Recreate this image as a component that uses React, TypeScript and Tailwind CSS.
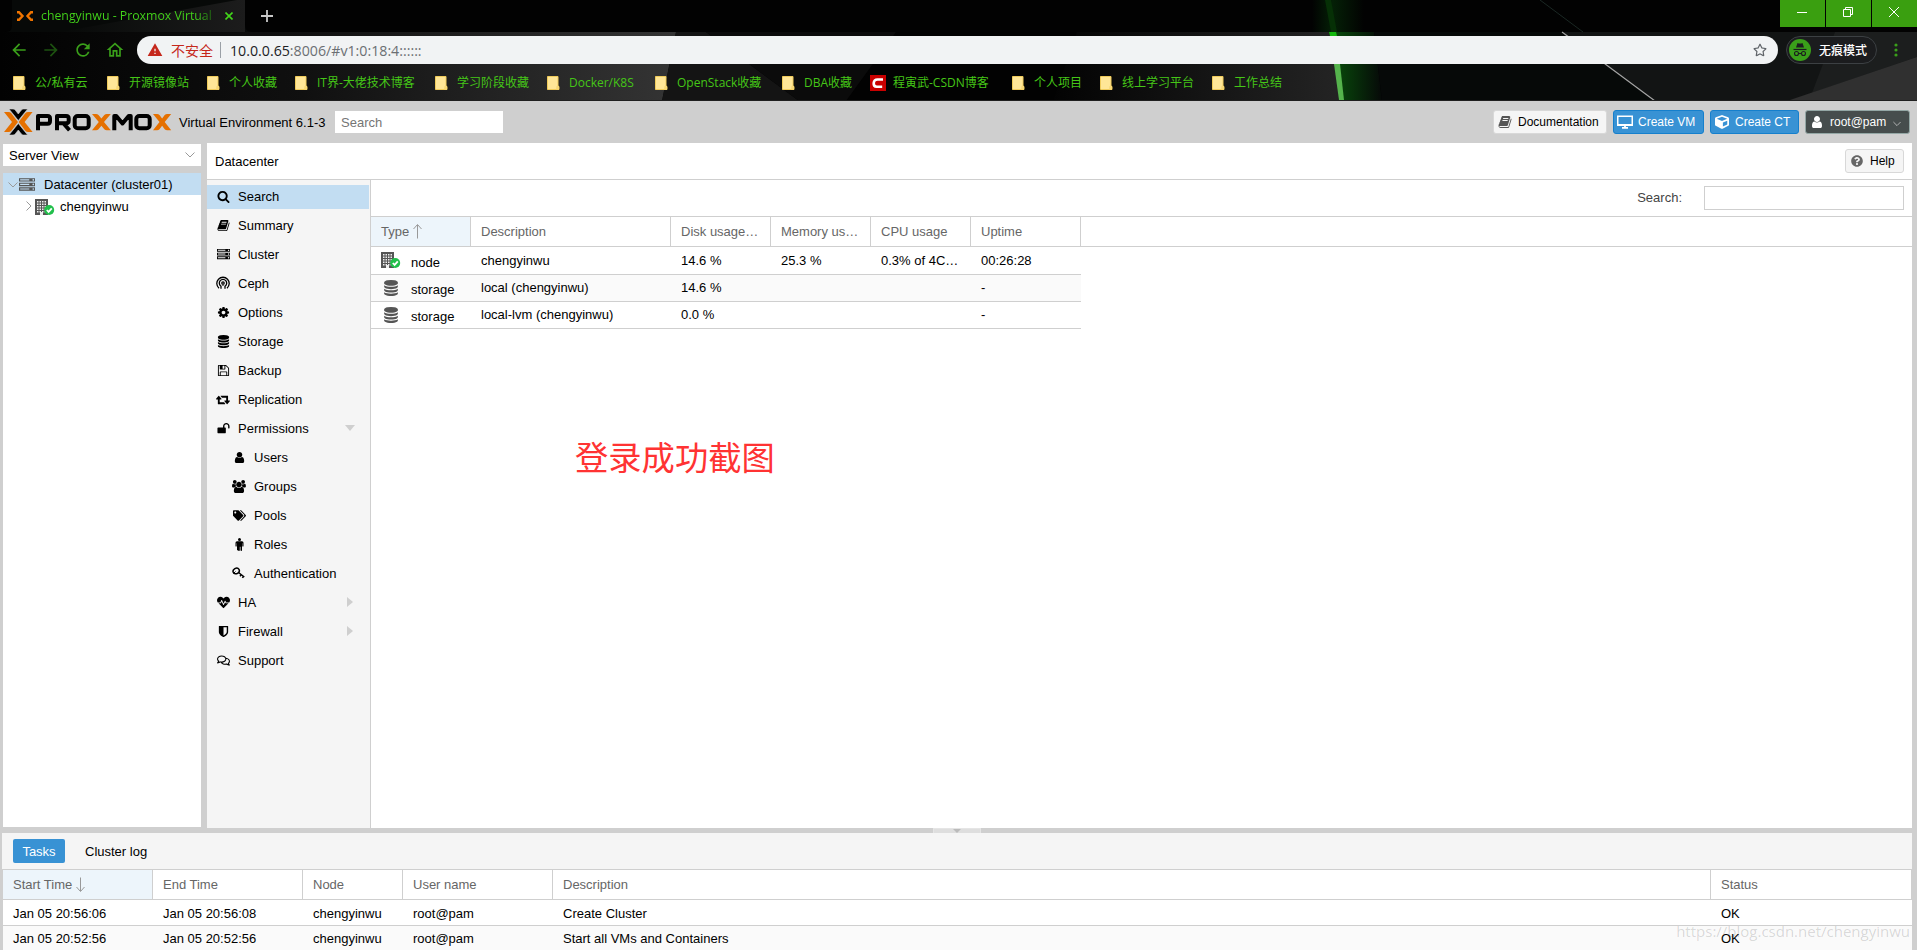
import type { ReactNode } from 'react';
import { FaCube, FaQuestionCircle, FaRegComments, FaRegStar, FaTags, FaHeartbeat } from 'react-icons/fa';
import { MdArrowBack, MdArrowForward, MdRefresh, MdOutlineHome, MdWarning } from 'react-icons/md';
import clsx from 'clsx';

const ui = "font-['Liberation_Sans','Noto_Sans_CJK_SC',sans-serif]";
const chromeFont = "font-['Open_Sans','Noto_Sans_CJK_SC',sans-serif]";

const paths = {
  search:
    'M1216 832q0-185-131.5-316.5t-316.5-131.5-316.5 131.5-131.5 316.5 131.5 316.5 316.5 131.5 316.5-131.5 131.5-316.5zm512 832q0 52-38 90t-90 38q-54 0-90-38l-343-342q-179 124-399 124-143 0-273.5-55.5t-225-150-150-225-55.5-273.5 55.5-273.5 150-225 225-150 273.5-55.5 273.5 55.5 225 150 150 225 55.5 273.5q0 220-124 399l343 343q37 37 37 90z',
  book:
    'M1703 478q40 57 18 129l-275 906q-19 64-76.5 107.5t-122.5 43.5h-923q-77 0-148.5-53.5t-99.5-131.5q-24-67-2-127 0-4 3-27t4-37q1-8-3-21.5t-3-19.5q2-11 8-21t16.5-23.5 16.5-23.5q23-38 45-91.5t30-91.5q3-10 .5-30t-.5-28q3-11 17-28t17-23q21-36 42-92t25-90q1-9-2.5-32t.5-28q4-13 22-30.5t22-22.5q19-26 42.5-84.5t27.5-96.5q1-8-3-25.5t-2-26.5q2-8 9-18t18-23 17-21q8-12 16.5-30.5t15-35 16-36 19.5-32 26.5-23.5 36-11.5 47.5 5.5l-1 3q38-9 51-9h761q74 0 114 56t18 130l-274 906q-36 119-71.5 153.5t-128.5 34.5h-869q-27 0-38 15-11 16-1 43 24 70 144 70h923q29 0 56-15.5t35-41.5l300-987q7-22 5-57 38 15 59 43zm-1064 2q-4 13 2 22.5t20 9.5h608q13 0 25.5-9.5t16.5-22.5l21-64q4-13-2-22.5t-20-9.5h-608q-13 0-25.5 9.5t-16.5 22.5zm-83 256q-4 13 2 22.5t20 9.5h608q13 0 25.5-9.5t16.5-22.5l21-64q4-13-2-22.5t-20-9.5h-608q-13 0-25.5 9.5t-16.5 22.5z',
  server:
    'M128 1408h1024v-128h-1024v128zm0-512h1024v-128h-1024v128zm1568 448q0-40-28-68t-68-28-68 28-28 68 28 68 68 28 68-28 28-68zm-1568-960h1024v-128h-1024v128zm1568 448q0-40-28-68t-68-28-68 28-28 68 28 68 68 28 68-28 28-68zm0-512q0-40-28-68t-68-28-68 28-28 68 28 68 68 28 68-28 28-68zm96 832v384h-1792v-384h1792zm0-512v384h-1792v-384h1792zm0-512v384h-1792v-384h1792z',
  cog:
    'M1152 896q0-106-75-181t-181-75-181 75-75 181 75 181 181 75 181-75 75-181zm512-109v222q0 12-8 23t-20 13l-185 28q-19 54-39 91 35 50 107 138 10 12 10 25t-9 23q-27 37-99 108t-94 71q-12 0-26-9l-138-108q-44 23-91 38-16 136-29 186-7 28-36 28h-222q-14 0-24.5-8.5t-11.5-21.5l-28-184q-49-16-90-37l-141 107q-10 9-25 9-14 0-25-11-126-114-165-168-7-10-7-23 0-12 8-23 15-21 51-66.5t54-70.5q-27-50-41-99l-183-27q-13-2-21-12.5t-8-23.5v-222q0-12 8-23t19-13l186-28q14-46 39-92-40-57-107-138-10-12-10-24 0-10 9-23 26-36 98.5-107.5t94.5-71.5q13 0 26 10l138 107q44-23 91-38 16-136 29-186 7-28 36-28h222q14 0 24.5 8.5t11.5 21.5l28 184q49 16 90 37l142-107q9-9 24-9 13 0 25 10 129 119 165 170 7 8 7 22 0 12-8 23-15 21-51 66.5t-54 70.5q26 50 41 98l183 28q13 2 21 12.5t8 23.5z',
  database:
    'M896 768q237 0 443-43t325-127v170q0 69-103 128t-280 93.5-385 34.5-385-34.5-280-93.5-103-128v-170q119 84 325 127t443 43zm0 768q237 0 443-43t325-127v170q0 69-103 128t-280 93.5-385 34.5-385-34.5-280-93.5-103-128v-170q119 84 325 127t443 43zm0-384q237 0 443-43t325-127v170q0 69-103 128t-280 93.5-385 34.5-385-34.5-280-93.5-103-128v-170q119 84 325 127t443 43zm0-1152q208 0 385 34.5t280 93.5 103 128v128q0 69-103 128t-280 93.5-385 34.5-385-34.5-280-93.5-103-128v-128q0-69 103-128t280-93.5 385-34.5z',
  floppy:
    'M512 1536h768v-384h-768v384zm896 0h128v-896q0-14-10-38.5t-20-34.5l-281-281q-10-10-34-20t-39-10v416q0 40-28 68t-68 28h-576q-40 0-68-28t-28-68v-416h-128v1280h128v-416q0-40 28-68t68-28h832q40 0 68 28t28 68v416zm-384-928v-320q0-13-9.5-22.5t-22.5-9.5h-192q-13 0-22.5 9.5t-9.5 22.5v320q0 13 9.5 22.5t22.5 9.5h192q13 0 22.5-9.5t9.5-22.5zm640 32v928q0 40-28 68t-68 28h-1344q-40 0-68-28t-28-68v-1344q0-40 28-68t68-28h928q40 0 88 20t76 48l280 280q28 28 48 76t20 88z',
  retweet:
    'M1280 1504q0 13-9.5 22.5t-22.5 9.5h-960q-8 0-13.5-2t-9-7-5.5-8-3-11.5-1-11.5v-600h-192q-26 0-45-19t-19-45q0-24 15-41l320-384q19-22 49-22t49 22l320 384q15 17 15 41 0 26-19 45t-45 19h-192v384h576q16 0 25 11l160 192q7 10 7 21zm640-416q0 24-15 41l-320 384q-20 23-49 23t-49-23l-320-384q-15-17-15-41 0-26 19-45t45-19h192v-384h-576q-16 0-25-12l-160-192q-7-9-7-20 0-13 9.5-22.5t22.5-9.5h960q8 0 13.5 2t9 7 5.5 8 3 11.5 1 11.5v600h192q26 0 45 19t19 45z',
  unlock:
    'M1728 576v256q0 26-19 45t-45 19h-64q-26 0-45-19t-19-45v-256q0-106-75-181t-181-75-181 75-75 181v192h96q40 0 68 28t28 68v576q0 40-28 68t-68 28h-960q-40 0-68-28t-28-68v-576q0-40 28-68t68-28h672v-192q0-185 131.5-316.5t316.5-131.5 316.5 131.5 131.5 316.5z',
  user:
    'M1536 1399q0 109-62.5 187t-150.5 78h-854q-88 0-150.5-78t-62.5-187q0-85 8.5-160.5t31.5-152 58.5-131 94-89 134.5-34.5q131 128 313 128t313-128q76 0 134.5 34.5t94 89 58.5 131 31.5 152 8.5 160.5zm-256-887q0 159-112.5 271.5t-271.5 112.5-271.5-112.5-112.5-271.5 112.5-271.5 271.5-112.5 271.5 112.5 112.5 271.5z',
  users:
    'M593 896q-162 5-265 128h-134q-82 0-138-40.5t-56-118.5q0-353 124-353 6 0 43.5 21t97.5 42.5 119 21.5q67 0 133-23-5 37-5 66 0 139 81 256zm1071 637q0 120-73 189.5t-194 69.5h-874q-121 0-194-69.5t-73-189.5q0-53 3.5-103.5t14-109 26.5-108.5 43-97.5 62-81 85.5-53.5 111.5-20q10 0 43 21.5t73 48 107 48 135 21.5 135-21.5 107-48 73-48 43-21.5q61 0 111.5 20t85.5 53.5 62 81 43 97.5 26.5 108.5 14 109 3.5 103.5zm-1024-1277q0 106-75 181t-181 75-181-75-75-181 75-181 181-75 181 75 75 181zm704 384q0 159-112.5 271.5t-271.5 112.5-271.5-112.5-112.5-271.5 112.5-271.5 271.5-112.5 271.5 112.5 112.5 271.5zm576 225q0 78-56 118.5t-138 40.5h-134q-103-123-265-128 81-117 81-256 0-29-5-66 66 23 133 23 59 0 119-21.5t97.5-42.5 43.5-21q124 0 124 353zm-128-609q0 106-75 181t-181 75-181-75-75-181 75-181 181-75 181 75 75 181z',
  shield:
    'M1344 960v-640h-448v1137q119-63 213-137 235-184 235-360zm192-768v768q0 86-33.5 170.5t-83 150-118 127.5-126.5 103-121 77.5-89.5 49.5-42.5 20q-12 6-26 6t-26-6q-16-7-42.5-20t-89.5-49.5-121-77.5-126.5-103-118-127.5-83-150-33.5-170.5v-768q0-26 19-45t45-19h1152q26 0 45 19t19 45z',
};

function Glyph({ name, size = 13, wide = false, className }: { name: keyof typeof paths; size?: number; wide?: boolean; className?: string }) {
  return (
    <svg width={wide ? size * 1.07 : size} height={size} viewBox={wide ? '0 0 1920 1792' : '0 0 1792 1792'} fill="currentColor" className={className}>
      <path d={paths[name]} />
    </svg>
  );
}

function CephIcon() {
  return (
    <svg width="14" height="14" viewBox="0 0 14 14" fill="none" stroke="currentColor" strokeWidth="1.3">
      <path d="M3 12.200A6.200 6.200 0 1 1 11 12.200" />
      <path d="M5 12.800v-2.600A3.700 3.700 0 1 1 9 10.200v2.600" />
      <circle cx="7" cy="7" r="1.200" />
      <path d="M7 8.500v1.500" strokeWidth="1" />
    </svg>
  );
}

function MaleIcon() {
  return (
    <svg width="9" height="13" viewBox="0 0 9 13" fill="currentColor">
      <circle cx="4.500" cy="1.500" r="1.500" />
      <path d="M2 3.300h5Q8.500 3.300 8.500 4.800V8q0 .6-.6.6T7.300 8V5.300H7v7q0 .7-.7.7t-.8-.7V8.800h-.7v3.500q0 .7-.8.7T3 12.300l-1-.1V5.300h-.3V8q0 .6-.6.6T.5 8V4.800Q.5 3.300 2 3.300z" />
    </svg>
  );
}

function KeyIcon() {
  return (
    <svg width="14" height="14" viewBox="0 0 14 14" fill="none" stroke="currentColor" strokeWidth="1.5">
      <ellipse cx="4.200" cy="5" rx="3.200" ry="2.700" transform="rotate(-30 4.2 5)" />
      <path d="M6.500 6.500 12.300 11M9.200 8.800 8 10.300M11.500 10.300 10.400 11.900" />
      <path d="M1.500 7.500 3.500 5.500" strokeWidth="1" />
    </svg>
  );
}

function NodeIcon() {
  return (
    <svg width="20" height="17" viewBox="0 0 20 17">
      <path d="M0 0h13v16H0z" fill="#555" />
      {[2, 4.5, 7, 9.5, 12].map(y =>
        [2, 4.5, 7, 9.5].map(x => <rect key={`${x}-${y}`} x={x} y={y} width="1.500" height="1.500" fill="#eee" />)
      )}
      <rect x="5" y="13" width="3" height="3" fill="#eee" />
      <circle cx="14.200" cy="11" r="5" fill="#21bf4b" />
      <path d="m11.800 11 1.800 1.900 3.200-3.500" fill="none" stroke="#fff" strokeWidth="1.800" />
    </svg>
  );
}

function DesktopIcon() {
  return (
    <svg width="16" height="14" viewBox="0 0 16 14" fill="none" stroke="currentColor" strokeWidth="1.500">
      <rect x=".75" y="1.250" width="14.500" height="9" />
      <path d="M0 9.800h16" strokeWidth="1.600" />
      <path d="M8 10v2.500M5 12.800h6" strokeWidth="1.800" />
    </svg>
  );
}

function FolderIcon() {
  return (
    <svg width="13" height="14" viewBox="0 0 13 14">
      <path d="M.5.500h10.500v9.500l1 .5v3H.5z" fill="#ffe697" stroke="#f0cb5a" />
      <path d="M9.500 10h2.500v3.500h-3z" fill="#f7d774" />
    </svg>
  );
}

// dark wallpaper shown through the browser frame
function ChromeBackdrop() {
  return (
    <svg className="absolute inset-0" width="1917" height="101" viewBox="0 0 1917 101">
      <defs>
        <linearGradient id="left" x1="0" x2="1">
          <stop offset="0" stopColor="#020202" />
          <stop offset=".45" stopColor="#101010" />
          <stop offset="1" stopColor="#343434" />
        </linearGradient>
        <linearGradient id="mid" x1="0" x2="1">
          <stop offset="0" stopColor="#030303" />
          <stop offset="1" stopColor="#242424" />
        </linearGradient>
        <linearGradient id="glow" x1="0" x2="1">
          <stop offset="0" stopColor="#084b0b" />
          <stop offset="1" stopColor="#060908" />
        </linearGradient>
        <linearGradient id="haze" x1="0" x2="1">
          <stop offset="0" stopColor="#020202" />
          <stop offset=".4" stopColor="#042006" />
          <stop offset="1" stopColor="#020202" />
        </linearGradient>
        <linearGradient id="tab" x1="0" x2="1">
          <stop offset="0" stopColor="#070908" />
          <stop offset="1" stopColor="#1c1c1c" />
        </linearGradient>
      </defs>
      <path d="M0 0h1917v101H0z" fill="#020202" />
      <path d="M0 32h676l-14 69H0z" fill="url(#left)" />
      <path d="M676 32h30l93 69H662z" fill="#141414" />
      <path d="M706 32h190l-50 69h-47z" fill="#0b0b0b" />
      <path d="M1077 32h255l11 69h-290z" fill="url(#mid)" />
      <path d="M1334 32h40l8 69h-39z" fill="url(#glow)" />
      <path d="M1374 32h543v69h-535z" fill="#060908" />
      <path d="M1562 32h355v69h-262z" fill="#121414" />
      <path d="M1835 32h82v25l-105 36z" fill="#1c1e1e" />
      <path d="m1917 57v44h-130z" fill="#303030" />
      <path d="M1562 32 1655 101" stroke="#a5a5a5" strokeWidth="1.200" />
      <path d="m1540 0 43 32" stroke="#1b2824" />
      <path d="M1312 0h52v32h-52z" fill="url(#haze)" />
      <path d="M1325 0h6l6 32h-6z" fill="#063006" />
      <path d="M1329 32h7l1 4h-7z" fill="#12b80d" />
      <path d="M1334 64h6l4 36h-5z" fill="#55b34c" />
      <path d="M5 32c7 0 7-4 7-10V0h233v22c0 7 1 10 9 10z" fill="#070908" />
      <path d="M60 32 237 0h8v32z" fill="url(#tab)" />
      <path d="M0 100.500h1917" stroke="#202020" />
    </svg>
  );
}

const bookmarks = [
  { label: '公/私有云', width: 'w-[94px]' },
  { label: '开源镜像站', width: 'w-[100px]' },
  { label: '个人收藏', width: 'w-[88px]' },
  { label: 'IT界-大佬技术博客', width: 'w-[140px]' },
  { label: '学习阶段收藏', width: 'w-[112px]' },
  { label: 'Docker/K8S', width: 'w-[108px]' },
  { label: 'OpenStack收藏', width: 'w-[127px]' },
  { label: 'DBA收藏', width: 'w-[88px]' },
  { label: '程寅武-CSDN博客', width: 'w-[142px]', csdn: true },
  { label: '个人项目', width: 'w-[88px]' },
  { label: '线上学习平台', width: 'w-[112px]' },
  { label: '工作总结', width: 'w-[90px]' },
];

function BrowserChrome() {
  return (
    <div className={clsx('relative h-[101px] shrink-0 bg-black', chromeFont)}>
      <ChromeBackdrop />
      <div className="relative flex h-8 justify-between">
        <div className="flex h-[31px] items-center pl-[17px]">
          <svg width="16" height="10" viewBox="0 0 16 10" fill="none" stroke="#f07400" strokeWidth="2.400">
            <path d="M0 1.200h2L5.500 5 2 8.800H0M16 1.200h-2L10.500 5 14 8.800h2" />
          </svg>
          <span className="ml-2 w-[172px] overflow-hidden whitespace-nowrap bg-gradient-to-r from-[#43d61a] from-90% to-[#1d5a10] bg-clip-text text-[12.3px] text-transparent">
            chengyinwu - Proxmox Virtual
          </span>
          <svg className="ml-3" width="8" height="8" viewBox="0 0 8 8" stroke="#43d61a" strokeWidth="1.600">
            <path d="m.5.500 7 7M7.500.500l-7 7" />
          </svg>
          <svg className="ml-[28px]" width="12" height="12" viewBox="0 0 12 12" stroke="#c8c8c8" strokeWidth="1.800">
            <path d="M6 0v12M0 6h12" />
          </svg>
        </div>
        <div className="flex h-[27px] gap-px">
          {[
            <path key="a" d="M0 5.500h10" />,
            <path key="b" d="M.5 2.500h7v7h-7zM2.500 2.500v-2h7v7h-2" />,
            <path key="c" d="m0 0 10 10M10 0 0 10" />,
          ].map((icon, i) => (
            <div key={i} className="flex w-[45px] items-center justify-center bg-[#3a9f10] pb-[3px] pr-[2px]">
              <svg width="10" height="10" viewBox="0 0 10 10" fill="none" stroke="#fff" strokeWidth="1">
                {icon}
              </svg>
            </div>
          ))}
        </div>
      </div>

      <div className="relative flex h-9 items-center text-[#3a9f1a]">
        <div className="flex w-[137px] items-center gap-[12px] pl-[9px]">
          <MdArrowBack size={20} />
          <MdArrowForward size={20} className="text-[#1d5210]" />
          <MdRefresh size={20} />
          <MdOutlineHome size={20} />
        </div>
        <div className="flex h-7 w-[1641px] items-center rounded-full bg-[#f1f3f4] pl-[10px] pr-[11px]">
          <MdWarning size={16} className="text-[#c5281c]" />
          <span className="ml-2 text-[14px] text-[#c5281c]">不安全</span>
          <span className="ml-[7px] h-4 w-px bg-[#9aa0a6]" />
          <span className="ml-[9px] text-[14.2px] text-[#6b6f73]">
            <span className="text-[#202124]">10.0.0.65</span>:8006/#v1:0:18:4::::::
          </span>
          <FaRegStar size={14} className="ml-auto text-[#5f6368]" />
        </div>
        <div className="ml-2 flex h-7 w-[91px] items-center rounded-full border border-[#3c4043] bg-[#1b1c1e] pl-0.5">
          <svg width="22" height="22" viewBox="0 0 22 22">
            <circle cx="11" cy="11" r="11" fill="#3a9f1a" />
            <path d="M7 8.500 8.500 4q2.500 1 5 0L15 8.500z" fill="#1b1c1e" />
            <path d="M4.500 10.500h13" stroke="#1b1c1e" strokeWidth="1.200" />
            <g fill="none" stroke="#1b1c1e" strokeWidth="1.100">
              <circle cx="7.500" cy="14.500" r="2" />
              <circle cx="14.500" cy="14.500" r="2" />
              <path d="M9.500 14.500h3" />
            </g>
          </svg>
          <span className="ml-[8px] text-[12px] font-medium text-white">无痕模式</span>
        </div>
        <svg className="ml-[17px]" width="4" height="14" viewBox="0 0 4 14" fill="#3a9f1a">
          <circle cx="2" cy="2" r="1.600" />
          <circle cx="2" cy="7" r="1.600" />
          <circle cx="2" cy="12" r="1.600" />
        </svg>
      </div>

      <div className="relative flex h-[29px] items-center pl-[13px] text-[12px] text-[#45c617]">
        {bookmarks.map(b => (
          <div key={b.label} className={clsx('flex shrink-0 items-center whitespace-nowrap', b.width)}>
            {b.csdn ? (
              <svg width="16" height="16" viewBox="0 0 16 16">
                <path d="M0 0h16v16H0z" fill="#c90000" />
                <path d="M13 4.500H7.500Q4 4.500 3.700 8t3 3.800h5.500" fill="none" stroke="#fff" strokeWidth="2.600" />
              </svg>
            ) : (
              <FolderIcon />
            )}
            <span className={b.csdn ? 'ml-[7px]' : 'ml-[9px]'}>{b.label}</span>
          </div>
        ))}
      </div>
    </div>
  );
}

function ProxmoxLogo() {
  return (
    <svg width="168" height="26" viewBox="0 0 168 26" fill="none">
      <g fill="#e57000">
        <path d="M0 3h4.500q1.700 0 2.800 1.300L14 13l-6.700 8.700Q6.200 23 4.500 23H0l8-10z" />
        <path d="M28.600 3h-4.500q-1.700 0-2.800 1.300L14.600 13l6.700 8.700q1.100 1.300 2.800 1.300h4.500l-8-10z" />
      </g>
      <path
        d="M5 0h4q1.300 0 2.200 1l3.100 4 3.100-4q.9-1 2.200-1h4L14.300 11.500zM5 26h4q1.300 0 2.200-1l3.100-4 3.100 4q.9 1 2.200 1h4L14.300 14.500z"
        fill="#000"
        stroke="#cfcfcf"
        strokeWidth=".6"
      />
      <g stroke="#000" strokeWidth="4" strokeLinejoin="round">
        <path d="M34 21.300V7h9.500q2.500 0 2.500 2.500V12q0 2.700-2.500 2.700H35" />
        <path d="M53 21.300V7h9.200q2.500 0 2.500 2.500v2q0 2.700-2.500 2.700H54M60 15l5.500 6.300" />
        <rect x="70.700" y="7" width="14" height="12.300" rx="3" />
        <path d="M110.300 21.300V7h2l6.200 7.500 6.200-7.500h2v14.300" />
        <rect x="132.300" y="7" width="13.400" height="12.300" rx="3" />
      </g>
      <g fill="#e57000">
        <path d="M88 5h4q1.500 0 2.500 1.100l2.900 3.400 2.900-3.400q1-1.100 2.500-1.100h4L100 13.100l6.800 8.200h-4q-1.500 0-2.500-1.100l-2.900-3.400-2.900 3.400q-1 1.100-2.500 1.100h-4l6.800-8.200z" />
        <path d="M149 5h4q1.500 0 2.500 1.100l2.600 3.400 2.600-3.400q1-1.100 2.500-1.100h4l-6.500 8.100 6.500 8.200h-4q-1.500 0-2.500-1.100l-2.600-3.400-2.600 3.400q-1 1.100-2.500 1.100h-4l6.500-8.200z" />
      </g>
    </svg>
  );
}

function Chevron({ className, right = false }: { className?: string; right?: boolean }) {
  return (
    <svg className={className} width={right ? 6 : 10} height={right ? 10 : 6} viewBox={right ? '0 0 6 10' : '0 0 10 6'} fill="none" stroke="currentColor">
      <path d={right ? 'M.5.500 5 5 .5 9.500' : 'M.5.500 5 5 9.500.500'} />
    </svg>
  );
}

function Header() {
  return (
    <div className="flex h-[42px] shrink-0 items-center pl-1 pr-[7px]">
      <ProxmoxLogo />
      <span className="ml-[7px] w-[149px] whitespace-nowrap">Virtual Environment 6.1-3</span>
      <div className="ml-[7px] h-[22px] w-[168px] bg-white pl-[6px] leading-[23px] text-[#757575]">Search</div>
      <div className="ml-auto flex h-6 gap-[6px]">
        <div className="flex w-[114px] items-center rounded-[3px] border border-[#d8d8d8] bg-[#f5f5f5] pl-1">
          <Glyph name="book" size={14} className="text-[#555]" />
          <span className="ml-[6px] text-[12px]">Documentation</span>
        </div>
        <div className="flex w-[91px] items-center rounded-[3px] border border-[#157fcc] bg-[#3892d4] pl-[3px] text-white">
          <DesktopIcon />
          <span className="ml-[5px] whitespace-nowrap text-[12px]">Create VM</span>
        </div>
        <div className="flex w-[89px] items-center rounded-[3px] border border-[#157fcc] bg-[#3892d4] pl-[4px] text-white">
          <FaCube size={14} />
          <span className="ml-[6px] whitespace-nowrap text-[12px]">Create CT</span>
        </div>
        <div className="flex w-[105px] items-center rounded-[3px] border border-[#94a7a5] bg-[#464d4d] pl-1 text-white">
          <Glyph name="user" size={14} />
          <span className="ml-[6px] text-[12px]">root@pam</span>
          <Chevron className="ml-[7px] mt-1 w-2 text-[#ccc]" />
        </div>
      </div>
    </div>
  );
}

function ResourceTree() {
  return (
    <div className="mb-px ml-[3px] flex w-[198px] shrink-0 flex-col">
      <div className="mt-px flex h-[22px] items-center justify-between bg-white pl-[6px] pr-[6px]">
        Server View
        <Chevron className="text-[#999]" />
      </div>
      <div className="mt-[7px] flex-1 bg-white">
        <div className="flex h-[22px] items-center bg-[#c2ddf2] pl-[5px]">
          <Chevron className="mt-0.5 text-[#999]" />
          <Glyph name="server" size={16} className="ml-px mt-px text-[#555]" />
          <span className="ml-[9px] pt-px">Datacenter (cluster01)</span>
        </div>
        <div className="flex h-[22px] items-center pl-[23px]">
          <Chevron right className="text-[#999]" />
          <span className="ml-[3px] mt-0.5">
            <NodeIcon />
          </span>
          <span className="ml-[5px] pt-px">chengyinwu</span>
        </div>
      </div>
    </div>
  );
}

type MenuItem = { label: string; icon: ReactNode; active?: boolean; child?: boolean; arrow?: 'down' | 'right' };

const menu: MenuItem[] = [
  { label: 'Search', icon: <Glyph name="search" />, active: true },
  { label: 'Summary', icon: <Glyph name="book" /> },
  { label: 'Cluster', icon: <Glyph name="server" /> },
  { label: 'Ceph', icon: <CephIcon /> },
  { label: 'Options', icon: <Glyph name="cog" /> },
  { label: 'Storage', icon: <Glyph name="database" /> },
  { label: 'Backup', icon: <Glyph name="floppy" /> },
  { label: 'Replication', icon: <Glyph name="retweet" wide /> },
  { label: 'Permissions', icon: <Glyph name="unlock" />, arrow: 'down' },
  { label: 'Users', icon: <Glyph name="user" />, child: true },
  { label: 'Groups', icon: <Glyph name="users" wide />, child: true },
  { label: 'Pools', icon: <FaTags size={13} />, child: true },
  { label: 'Roles', icon: <MaleIcon />, child: true },
  { label: 'Authentication', icon: <KeyIcon />, child: true },
  { label: 'HA', icon: <FaHeartbeat size={13} />, arrow: 'right' },
  { label: 'Firewall', icon: <Glyph name="shield" />, arrow: 'right' },
  { label: 'Support', icon: <FaRegComments size={13} /> },
];

function SideMenu() {
  return (
    <div className="flex w-[164px] shrink-0 flex-col gap-[5px] border-r border-[#cfcfcf] bg-[#f5f5f5] pr-px pt-[5px]">
      {menu.map(m => (
        <div key={m.label} className={clsx('flex h-6 items-center pb-[2px]', m.active && 'bg-[#c2ddf2]', m.child ? 'pl-6' : 'pl-2')}>
          <span className="flex w-4 justify-center">{m.icon}</span>
          <span className="ml-[7px]">{m.label}</span>
          {m.arrow && (
            <svg className={clsx('ml-auto', m.arrow === 'down' ? 'mr-[14px]' : 'mr-4')} width={m.arrow === 'down' ? 10 : 6} height={m.arrow === 'down' ? 6 : 10} fill="#cfcfcf">
              <path d={m.arrow === 'down' ? 'M0 0h10L5 6z' : 'M0 0v10l6-5z'} />
            </svg>
          )}
        </div>
      ))}
    </div>
  );
}

function SortArrow({ down = false }: { down?: boolean }) {
  return (
    <svg className={clsx('ml-1', down && 'rotate-180')} width="9" height="15" viewBox="0 0 9 15" fill="none" stroke="#999">
      <path d="M4.500 14.500V1M.5 5l4-4.500 4 4.500" />
    </svg>
  );
}

const resourceCols = ['Type', 'Description', 'Disk usage…', 'Memory us…', 'CPU usage', 'Uptime'];
const resources = [
  { type: 'node', cells: ['chengyinwu', '14.6 %', '25.3 %', '0.3% of 4C…', '00:26:28'] },
  { type: 'storage', cells: ['local (chengyinwu)', '14.6 %', '', '', '-'] },
  { type: 'storage', cells: ['local-lvm (chengyinwu)', '0.0 %', '', '', '-'] },
];
const resourceGrid = 'grid grid-cols-[100px_200px_100px_100px_100px_110px]';

function ResourceTable() {
  return (
    <div className="relative min-w-0 flex-1 bg-white">
      <div className="flex h-9 items-center justify-end pr-2 text-[#444]">
        <span className="pb-px">Search:</span>
        <div className="ml-[22px] h-6 w-[200px] border border-[#cfcfcf] bg-white" />
      </div>
      <div className="h-[31px] border-y border-[#cfcfcf] text-[#666]">
        <div className={clsx(resourceGrid, 'h-full w-[710px]')}>
          {resourceCols.map((c, i) => (
            <div key={c} className={clsx('flex items-center whitespace-nowrap border-r border-[#cfcfcf] pl-[10px]', i === 0 && 'bg-[#edf5fb]')}>
              {c}
              {i === 0 && <SortArrow />}
            </div>
          ))}
        </div>
      </div>
      {resources.map((r, i) => (
        <div key={i} className={clsx(resourceGrid, 'w-[710px] border-b border-[#cfcfcf]', i === 0 ? 'h-7' : 'h-[27px]', i === 1 && 'bg-[#fafafa]')}>
          <div className="flex items-center pl-[10px] pt-[3px]">
            <span className="-mt-[3px] flex w-5 justify-center text-[#555]">{r.type === 'node' ? <NodeIcon /> : <Glyph name="database" size={16} />}</span>
            <span className="ml-[10px]">{r.type}</span>
          </div>
          {r.cells.map((c, j) => (
            <div key={j} className={clsx('flex items-center whitespace-nowrap pl-[10px]', i > 0 && 'pb-px')}>
              {c}
            </div>
          ))}
        </div>
      ))}
      <div className="absolute left-[204px] top-[252px] whitespace-nowrap font-['Noto_Sans_CJK_SC',sans-serif] text-[33.3px] leading-[48px] text-[#ff3333]">登录成功截图</div>
    </div>
  );
}

const taskCols = ['Start Time', 'End Time', 'Node', 'User name', 'Description', 'Status'];
const tasks = [
  ['Jan 05 20:56:06', 'Jan 05 20:56:08', 'chengyinwu', 'root@pam', 'Create Cluster', 'OK'],
  ['Jan 05 20:52:56', 'Jan 05 20:52:56', 'chengyinwu', 'root@pam', 'Start all VMs and Containers', 'OK'],
];
const taskGrid = 'grid grid-cols-[150px_150px_100px_150px_1158px_200px]';

function TaskLog() {
  return (
    <div className="relative ml-[2px] mr-[5px] h-[117px] shrink-0 bg-[#f5f5f5]">
      <div className="flex h-9 items-center pl-[11px]">
        <div className="flex h-6 w-[52px] items-center justify-center rounded-[2px] bg-[#3892d4] text-white">Tasks</div>
        <div className="ml-5">Cluster log</div>
      </div>
      <div className={clsx(taskGrid, 'h-[31px] border-x border-y border-[#cfcfcf] bg-white text-[#666]')}>
        {taskCols.map((c, i) => (
          <div key={c} className={clsx('flex items-center border-[#cfcfcf] pl-[10px]', i < 5 && 'border-r', i === 0 && 'bg-[#edf5fb]')}>
            {c}
            {i === 0 && <SortArrow down />}
          </div>
        ))}
      </div>
      {tasks.map((t, i) => (
        <div key={i} className={clsx(taskGrid, 'border-b border-l border-[#cfcfcf]', i === 0 ? 'h-[26px] bg-white' : 'h-[25px] bg-[#fafafa]')}>
          {t.map((c, j) => (
            <div key={j} className="flex items-center pl-[10px] pt-px">
              {c}
            </div>
          ))}
        </div>
      ))}
      <span className="absolute bottom-[10px] right-[2px] whitespace-nowrap font-['Open_Sans',sans-serif] text-[15px] text-black/15">
        https://blog.csdn.net/chengyinwu
      </span>
    </div>
  );
}

export default function App() {
  return (
    <div className={clsx('flex h-[950px] w-[1917px] flex-col overflow-hidden bg-[#cfcfcf] text-[13px] leading-[17px] text-black', ui)}>
      <BrowserChrome />
      <Header />
      <div className="flex min-h-0 flex-1 pr-[5px]">
        <ResourceTree />
        <div className="ml-[6px] flex min-w-0 flex-1 flex-col">
          <div className="flex h-[37px] items-center justify-between border-b border-[#cfcfcf] bg-white pl-2 pr-2">
            Datacenter
            <div className="flex h-6 w-[59px] items-center rounded-[3px] border border-[#d8d8d8] bg-[#f5f5f5] pl-[5px] text-[12px]">
              <FaQuestionCircle size={12} className="text-[#666]" />
              <span className="ml-[7px]">Help</span>
            </div>
          </div>
          <div className="flex min-h-0 flex-1">
            <SideMenu />
            <ResourceTable />
          </div>
        </div>
      </div>
      <div className="flex h-[5px] shrink-0 justify-center pr-[3px]">
        <div className="flex w-12 justify-center border-x border-t border-[#e5e5e5] bg-[#dedede]">
          <svg width="8" height="4" fill="#bbb">
            <path d="M0 0h8L4 4z" />
          </svg>
        </div>
      </div>
      <TaskLog />
    </div>
  );
}
